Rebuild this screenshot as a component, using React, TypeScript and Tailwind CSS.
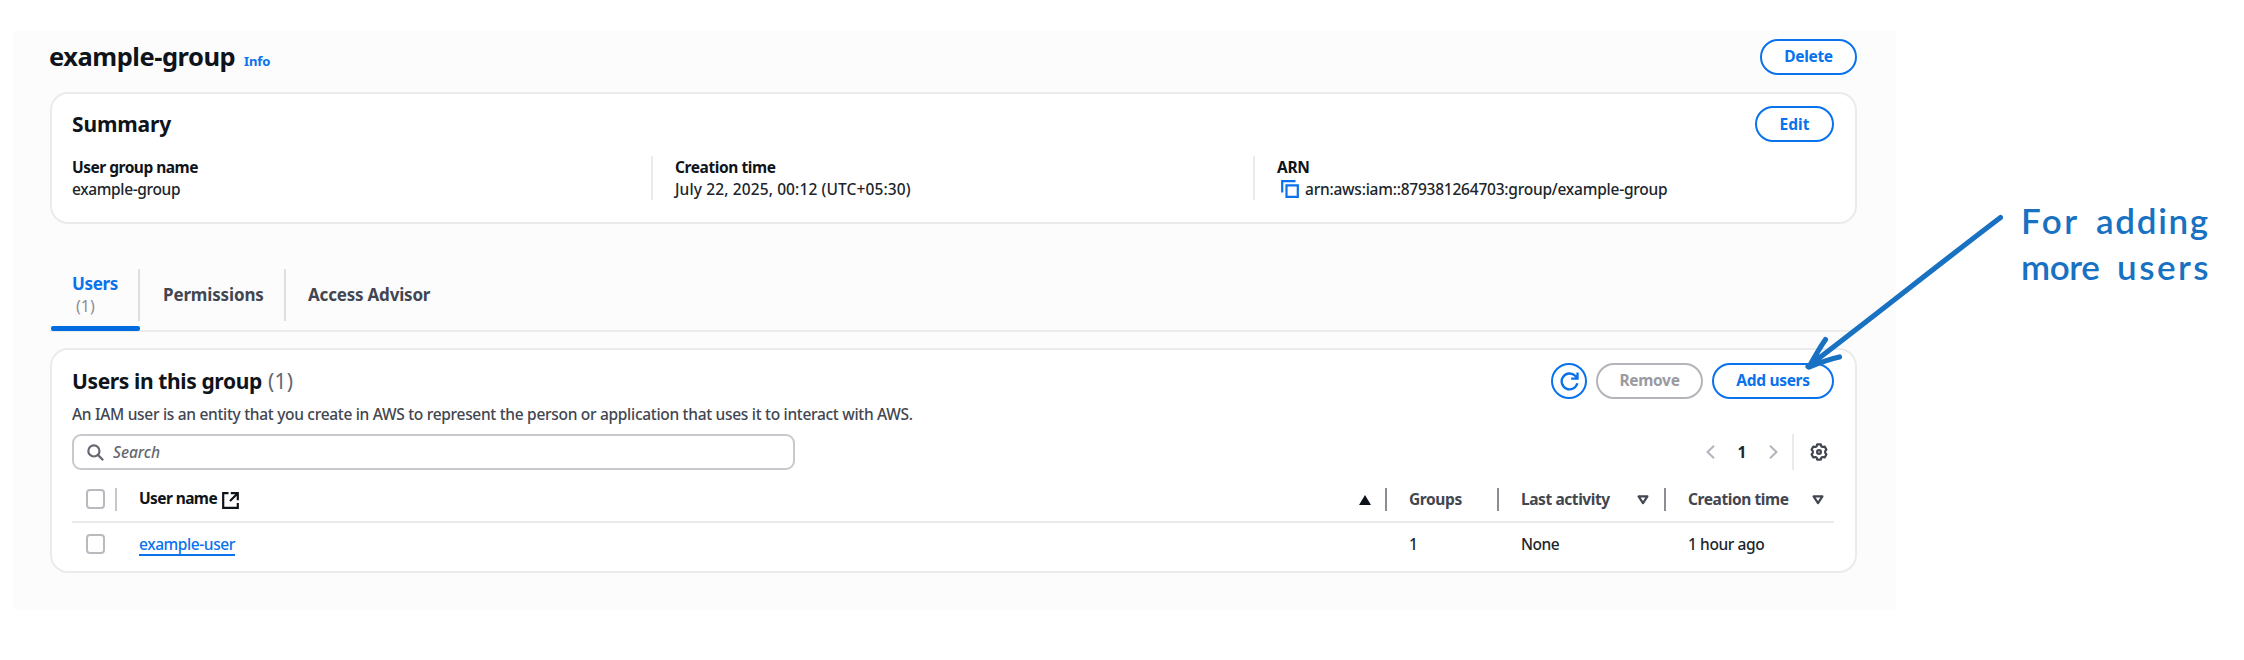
import type { ReactNode } from "react";

function PillButton({ children, className }: { children: ReactNode; className: string }) {
  return (
    <button className={`flex items-center justify-center rounded-full border-2 bg-white text-[15.5px] font-bold ${className}`}>
      {children}
    </button>
  );
}

function Checkbox() {
  return <span className="ml-[14px] block h-5 w-[19px] rounded-[4px] border-2 border-[#b9b9c0] bg-white" />;
}

function ColumnDivider({ className = "bg-[#8c8c94]" }: { className?: string }) {
  return <span className={`block h-[23px] w-[2px] shrink-0 ${className}`} />;
}

function SortDown() {
  return (
    <svg viewBox="0 0 12 10" className="h-[10px] w-3 shrink-0" fill="none" stroke="#424650" strokeWidth="2.2" strokeLinejoin="round">
      <path d="M1.6 1.4h8.8L6 8.2z" />
    </svg>
  );
}

const columns = "grid grid-cols-[45px_1270px_112px_167px_1fr]";

export default function App() {
  return (
    <div className="relative h-[660px] w-[2244px] overflow-hidden bg-white font-['Noto_Sans',sans-serif] text-[15.5px] font-medium whitespace-nowrap text-[#20252c]">
      <div className="h-[31px]" />
      <main className="ml-[14px] h-[579px] w-[1882px] bg-[#fcfcfc] pt-2 pr-[39px] pl-9">
        <header className="flex h-[35px] items-center justify-between">
          <div className="-ml-px flex items-baseline text-[#0f141a]">
            <h1 className="w-[195px] text-[25.5px] leading-[35px] font-bold tracking-[-0.47px]">example-group</h1>
            <a className="text-[13px] font-bold tracking-[-0.1px] text-[#0972ec]">Info</a>
          </div>
          <PillButton className="h-9 w-[97px] border-[#0972ec] pt-px tracking-[-0.33px] text-[#0972ec]">Delete</PillButton>
        </header>

        <section className="mt-[18px] h-[132px] rounded-[18px] border-2 border-[#ebebeb] bg-white pt-3 pr-[21px] pl-5">
          <div className="flex h-9 items-center justify-between">
            <h2 className="pt-[2px] text-[21px] font-bold tracking-[-0.15px] text-[#0f141a]">Summary</h2>
            <PillButton className="h-9 w-[79px] border-[#0972ec] pt-px text-[#0972ec]">Edit</PillButton>
          </div>
          <dl className="mt-[14px] grid h-11 grid-cols-[579px_602px_1fr] leading-[22px]">
            <div>
              <dt className="font-bold tracking-[-0.5px] text-[#0f141a]">User group name</dt>
              <dd className="tracking-[-0.36px]">example-group</dd>
            </div>
            <div className="border-l-2 border-[#ebebeb] pl-[22px]">
              <dt className="font-bold tracking-[-0.42px] text-[#0f141a]">Creation time</dt>
              <dd className="tracking-[0.12px]">July 22, 2025, 00:12 (UTC+05:30)</dd>
            </div>
            <div className="border-l-2 border-[#ebebeb] pl-[22px]">
              <dt className="font-bold tracking-[-0.33px] text-[#0f141a]">ARN</dt>
              <dd className="flex items-center tracking-[-0.23px]">
                <svg viewBox="0 0 18 18" className="mr-[6px] ml-1 h-[18px] w-[18px]" fill="none" stroke="#0972ec" strokeWidth="2.2">
                  <path d="M1.2 12.5V1.2h13.3M5.5 5.4h11.3v11.4H5.5z" />
                </svg>
                arn:aws:iam::879381264703:group/example-group
              </dd>
            </div>
          </dl>
        </section>

        <nav className="mt-[45px] flex h-[63px] border-b-2 border-[#ebebeb] text-[17px] font-bold text-[#424650]">
          <div className="relative flex h-[52px] w-[90px] flex-col justify-center border-r-2 border-[#dedee3] pl-[22px] leading-[23px]">
            <span className="tracking-[-0.33px] text-[#0972ec]">Users</span>
            <span className="pl-1 text-[16px] font-normal text-[#8c8c94]">(1)</span>
            <span className="absolute top-[57px] left-px h-[5px] w-[89px] rounded-[2px] bg-[#006ce0]" />
          </div>
          <div className="flex h-[52px] w-[146px] items-center border-r-2 border-[#dedee3] pl-[23px] tracking-[-0.15px]">Permissions</div>
          <div className="flex h-[52px] items-center pl-[22px] tracking-[-0.2px]">Access Advisor</div>
        </nav>

        <section className="mt-4 h-[225px] rounded-[18px] border-2 border-[#ebebeb] bg-white pt-[13px] pr-[21px] pl-5">
          <div className="flex h-9 items-center justify-between">
            <h2 className="pt-px text-[21px] font-bold tracking-[-0.38px] text-[#0f141a]">
              Users in this group <span className="ml-px font-normal tracking-[0.3px] text-[#656871]">(1)</span>
            </h2>
            <div className="flex gap-[9px]">
              <button className="flex size-9 items-center justify-center rounded-full border-2 border-[#0972ec] bg-white">
                <svg viewBox="0 0 18 18" className="size-[19px]" fill="none" stroke="#0972ec" strokeWidth="2.2">
                  <path d="M16.4 10.600A7.500 7.500 0 1 1 14.600 3.800L16.200 5.800M16.600 0.400V6.300H10.600" />
                </svg>
              </button>
              <PillButton className="w-[107px] border-[#b4b4bb] tracking-[-0.3px] text-[#9a9aa2]">Remove</PillButton>
              <PillButton className="w-[122px] border-[#0972ec] tracking-[-0.3px] text-[#0972ec]">Add users</PillButton>
            </div>
          </div>
          <p className="mb-[6px] h-[29px] leading-[30px] tracking-[-0.303px] text-[#424650]">
            An IAM user is an entity that you create in AWS to represent the person or application that uses it to interact with AWS.
          </p>
          <div className="flex h-9 items-center justify-between">
            <div className="flex h-9 w-[723px] items-center rounded-[9px] border-2 border-[#c9c9cd] bg-white pl-[13px]">
              <svg viewBox="0 0 18 18" className="mr-[9px] size-[17px]" fill="none" stroke="#656871" strokeWidth="2.3">
                <circle cx="7.3" cy="7.3" r="5.9" />
                <path d="M11.5 11.5l5.6 5.6" />
              </svg>
              <span className="pt-px text-[#656871] italic">Search</span>
            </div>
            <div className="flex items-center">
              <svg viewBox="0 0 9 14" className="h-[14px] w-[9px]" fill="none" stroke="#b4b4bb" strokeWidth="2">
                <path d="M8 .8L1.5 7 8 13.2" />
              </svg>
              <span className="w-[54px] pt-px text-center font-bold">1</span>
              <svg viewBox="0 0 9 14" className="h-[14px] w-[9px]" fill="none" stroke="#b4b4bb" strokeWidth="2">
                <path d="M1 .8L7.5 7 1 13.2" />
              </svg>
              <span className="mr-4 ml-[14px] h-9 w-[2px] bg-[#ebebeb]" />
              <svg viewBox="0 0 18 18" className="mr-[6px] size-[18px]" fill="none" stroke="#424650" strokeWidth="2.2" strokeLinejoin="round">
                <path d="M7.2 1.300h3.600l.5 1.900 1.300.8 2.100-.4 1.700 2.900-1.200 1.600v1.800l1.200 1.600-1.700 2.900-2.100-.4-1.300.8-.5 1.900H7.200l-.5-1.900-1.300-.8-2.100.4-1.700-2.900 1.200-1.600V8.100L1.600 6.500l1.700-2.900 2.100.4 1.300-.8z" />
                <circle cx="9" cy="9" r="1.9" />
              </svg>
            </div>
          </div>

          <div className={`${columns} h-[53px] items-center border-b-2 border-[#ebebeb] pt-[7px] font-bold text-[#424650]`}>
            <div className="flex items-center justify-between">
              <Checkbox />
              <ColumnDivider className="bg-[#c6c6cd]" />
            </div>
            <div className="flex items-center pl-[22px] text-[#0f141a]">
              <span className="tracking-[-0.6px]">User name</span>
              <svg viewBox="0 0 17 17" className="mt-[2px] ml-[5px] size-[17px]" fill="none" stroke="#0f141a" strokeWidth="2.2">
                <path d="M6.500 1.200H1.200v14.600h14.600V11M8.800 1.200h7v7M15.500 1.500L8 9" />
              </svg>
              <svg viewBox="0 0 12 10" className="mt-[2px] mr-[14px] ml-auto h-[10px] w-3" fill="#0f141a">
                <path d="M6 0l6 10H0z" />
              </svg>
              <ColumnDivider />
            </div>
            <div className="flex items-center justify-between pl-[22px] tracking-[-0.4px]">
              <span className="pt-[2px]">Groups</span>
              <ColumnDivider />
            </div>
            <div className="flex items-center pl-[22px] tracking-[-0.42px]">
              <span className="pt-[2px]">Last activity</span>
              <span className="mt-[2px] mr-[15px] ml-auto">
                <SortDown />
              </span>
              <ColumnDivider />
            </div>
            <div className="flex items-center justify-between pt-[2px] pr-[10px] pl-[22px] tracking-[-0.42px]">
              Creation time
              <SortDown />
            </div>
          </div>
          <div className={`${columns} h-[42px] items-center`}>
            <Checkbox />
            <div className="pl-[22px]">
              <a className="mt-[2px] inline-block h-[22px] border-b-2 border-[#0972ec] leading-[21px] tracking-[-0.42px] text-[#0972ec]">example-user</a>
            </div>
            <div className="pt-[2px] pl-[22px]">1</div>
            <div className="pt-[2px] pl-[22px] tracking-[-0.45px]">None</div>
            <div className="pt-[2px] pl-[22px] tracking-[-0.4px]">1 hour ago</div>
          </div>
        </section>
      </main>

      <svg viewBox="0 0 200 160" className="absolute top-[213px] left-[1803px] h-40 w-[200px]" fill="none" stroke="#1971c2" strokeWidth="5.2" strokeLinecap="round" strokeLinejoin="round">
        <path d="M197.500 4.500C135 52 70 104 5 153.500M22.500 126.500C16.500 135 11.500 144 6 154M36.500 144C27 146 16 150 6 154" />
      </svg>
      <p className="absolute top-[197px] left-[2021px] font-['Lato',sans-serif] text-[35px] leading-[46px] font-semibold text-[#1971c2]">
        <span className="inline-block w-[75px] tracking-[2.5px]">For</span>
        <span className="tracking-[1.7px]">adding</span>
        <br />
        <span className="inline-block w-[96px] tracking-[-0.4px]">more</span>
        <span className="tracking-[2.500px]">users</span>
      </p>
    </div>
  );
}
